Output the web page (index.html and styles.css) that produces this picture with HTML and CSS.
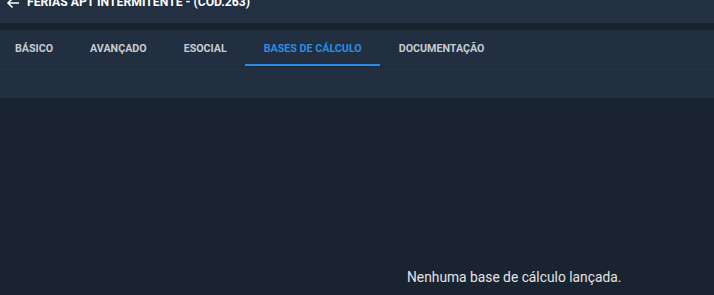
FILE: index.html
```html
<!DOCTYPE html>
<html lang="pt">
<head>
<meta charset="utf-8">
<link rel="stylesheet" href="styles.css">
</head>
<body>
<div class="page">
  <header class="topbar">
    <svg class="back" width="14" height="12" viewBox="0 0 14 12"><path d="M13 6H2M6.5 1.5L2 6l4.5 4.5" fill="none" stroke="#fff" stroke-width="1.6"/></svg>
    <span class="title">FÉRIAS APT INTERMITENTE - (CÓD.263)</span>
  </header>
  <nav class="tabs">
    <div class="tab">BÁSICO</div>
    <div class="tab">AVANÇADO</div>
    <div class="tab">ESOCIAL</div>
    <div class="tab active">BASES DE CÁLCULO</div>
    <div class="tab">DOCUMENTAÇÃO</div>
  </nav>
  <div class="toolbar"></div>
  <main class="content">
    <p class="empty">Nenhuma base de cálculo lançada.</p>
  </main>
</div>
</body>
</html>
```
FILE: styles.css
```css
* { box-sizing: border-box; }
html, body { margin: 0; padding: 0; }
body {
  background: #1a2330;
  font-family: Roboto, "Liberation Sans", sans-serif;
  width: 714px;
  height: 295px;
  overflow: hidden;
}
.page { display: flex; flex-direction: column; height: 295px; }
.topbar {
  height: 23px;
  background: #223042;
  display: flex;
  align-items: flex-start;
  padding-left: 6px;
  overflow: hidden;
  border-bottom: 7px solid #1a222c;
  box-sizing: content-box;
}
.back { margin-top: -3px; flex: none; }
.title {
  color: #fff;
  font-weight: 700;
  font-size: 12.2px;
  line-height: 16px;
  margin-top: -6px;
  margin-left: 7px;
  white-space: nowrap;
}
.tabs {
  height: 37px;
  background: #212f40;
  display: flex;
  margin-left: -3.5px;
  border-bottom: 1px solid #1d2a39;
}
.tab {
  padding: 2px 18.5px 0;
  display: flex;
  align-items: center;
  font-size: 10.7px;
  font-weight: 700;
  color: #c8ccd2;
  border-bottom: 2px solid transparent;
}
.tab.active {
  color: #2a8de6;
  border-bottom-color: #2a8de6;
}
.toolbar {
  height: 31px;
  background: #212f40;
}
.content {
  flex: 1;
  background: #1a2330;
  display: flex;
  align-items: flex-end;
  padding-left: 407px;
  padding-bottom: 9px;
}
.empty {
  margin: 0;
  color: #e2e4e7;
  font-size: 13.8px;
  line-height: 18px;
}
```
